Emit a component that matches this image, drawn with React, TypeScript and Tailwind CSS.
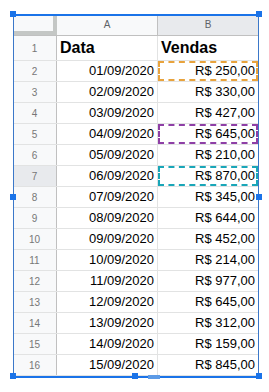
import React from 'react';

const rows: [string, string][] = [
  ['01/09/2020', 'R$ 250,00'],
  ['02/09/2020', 'R$ 330,00'],
  ['03/09/2020', 'R$ 427,00'],
  ['04/09/2020', 'R$ 645,00'],
  ['05/09/2020', 'R$ 210,00'],
  ['06/09/2020', 'R$ 870,00'],
  ['07/09/2020', 'R$ 345,00'],
  ['08/09/2020', 'R$ 644,00'],
  ['09/09/2020', 'R$ 452,00'],
  ['10/09/2020', 'R$ 214,00'],
  ['11/09/2020', 'R$ 977,00'],
  ['12/09/2020', 'R$ 645,00'],
  ['13/09/2020', 'R$ 312,00'],
  ['14/09/2020', 'R$ 159,00'],
  ['15/09/2020', 'R$ 845,00'],
];

// dashed "copy" outlines on some B cells
const dashed: Record<number, string> = {
  2: 'outline-dashed outline-2 -outline-offset-2 outline-[#e8a33d]',
  5: 'outline-dashed outline-2 -outline-offset-2 outline-[#8e3fa6]',
  7: 'outline-dashed outline-2 -outline-offset-2 outline-[#19a6b8]',
};

const Handle = ({ className }: { className: string }) => (
  <div className={`absolute w-[6px] h-[6px] bg-[#1a73e8] ${className}`} />
);

export default function App() {
  return (
    <div className="w-[269px] h-[392px] bg-white font-['Liberation_Sans',Arial,sans-serif] text-black">
      <div className="relative ml-[13px] pt-[14px] w-[246px]">
        <div className="flex flex-col">
          {/* column headers */}
          <div className="flex h-[22px] bg-[#f8f9fa] border-b border-[#c0c0c0]">
            <div className="w-[44px] border-r-4 border-b-4 border-[#c4c7c5] bg-[#f8f9fa]" />
            <div className="w-[101px] flex items-center justify-center text-[10px] text-[#5f6368] border-r border-[#c0c0c0]">
              A
            </div>
            <div className="w-[100px] flex items-center justify-center text-[10px] text-[#5f6368] bg-[#e8eaed]">
              B
            </div>
          </div>

          {/* header row */}
          <div className="flex h-[25px] border-b border-[#e2e3e3]">
            <div className="w-[44px] flex items-center justify-center text-[10px] text-[#777] bg-[#f8f9fa] border-r border-[#c0c0c0]">
              1
            </div>
            <div className="w-[101px] flex items-center pl-[3px] text-[16px] font-bold border-r border-[#e2e3e3]">
              Data
            </div>
            <div className="w-[100px] flex items-center pl-[3px] text-[16px] font-bold">Vendas</div>
          </div>

          {rows.map(([d, v], i) => {
            const n = i + 2;
            return (
              <div key={n} className="flex h-[21px] border-b border-[#e2e3e3]">
                <div
                  className={`w-[44px] flex items-center justify-center text-[10px] text-[#777] border-r border-[#c0c0c0] ${
                    n === 7 ? 'bg-[#e8eaed]' : 'bg-[#f8f9fa]'
                  }`}
                >
                  {n}
                </div>
                <div className="w-[101px] flex items-center justify-end pr-[3px] text-[13px] border-r border-[#e2e3e3]">
                  {d}
                </div>
                <div className={`w-[100px] flex items-center justify-end pr-[3px] text-[13px] ${dashed[n] ?? ''}`}>
                  {v}
                </div>
              </div>
            );
          })}
          <div className="h-[2px]" />
        </div>

        {/* selection frame */}
        <div className="absolute left-0 right-0 top-[14px] bottom-0 pointer-events-none border border-[#3b78c9] border-t-2 border-t-[#1a73e8] border-b-2 border-b-[#1a73e8]" />
        <Handle className="-left-[3px] top-[11px]" />
        <Handle className="-right-[3px] top-[11px]" />
        <Handle className="-left-[3px] top-[194px]" />
        <Handle className="-right-[3px] top-[194px]" />
        <Handle className="-left-[3px] -bottom-[1px] h-[4px]" />
        <Handle className="-right-[3px] -bottom-[1px] h-[4px]" />
        <Handle className="left-[119px] -bottom-[1px] h-[4px]" />
        <div className="absolute left-[135px] w-[12px] -bottom-[1px] h-[4px] bg-[#5c9ae6]" />
      </div>
    </div>
  );
}
